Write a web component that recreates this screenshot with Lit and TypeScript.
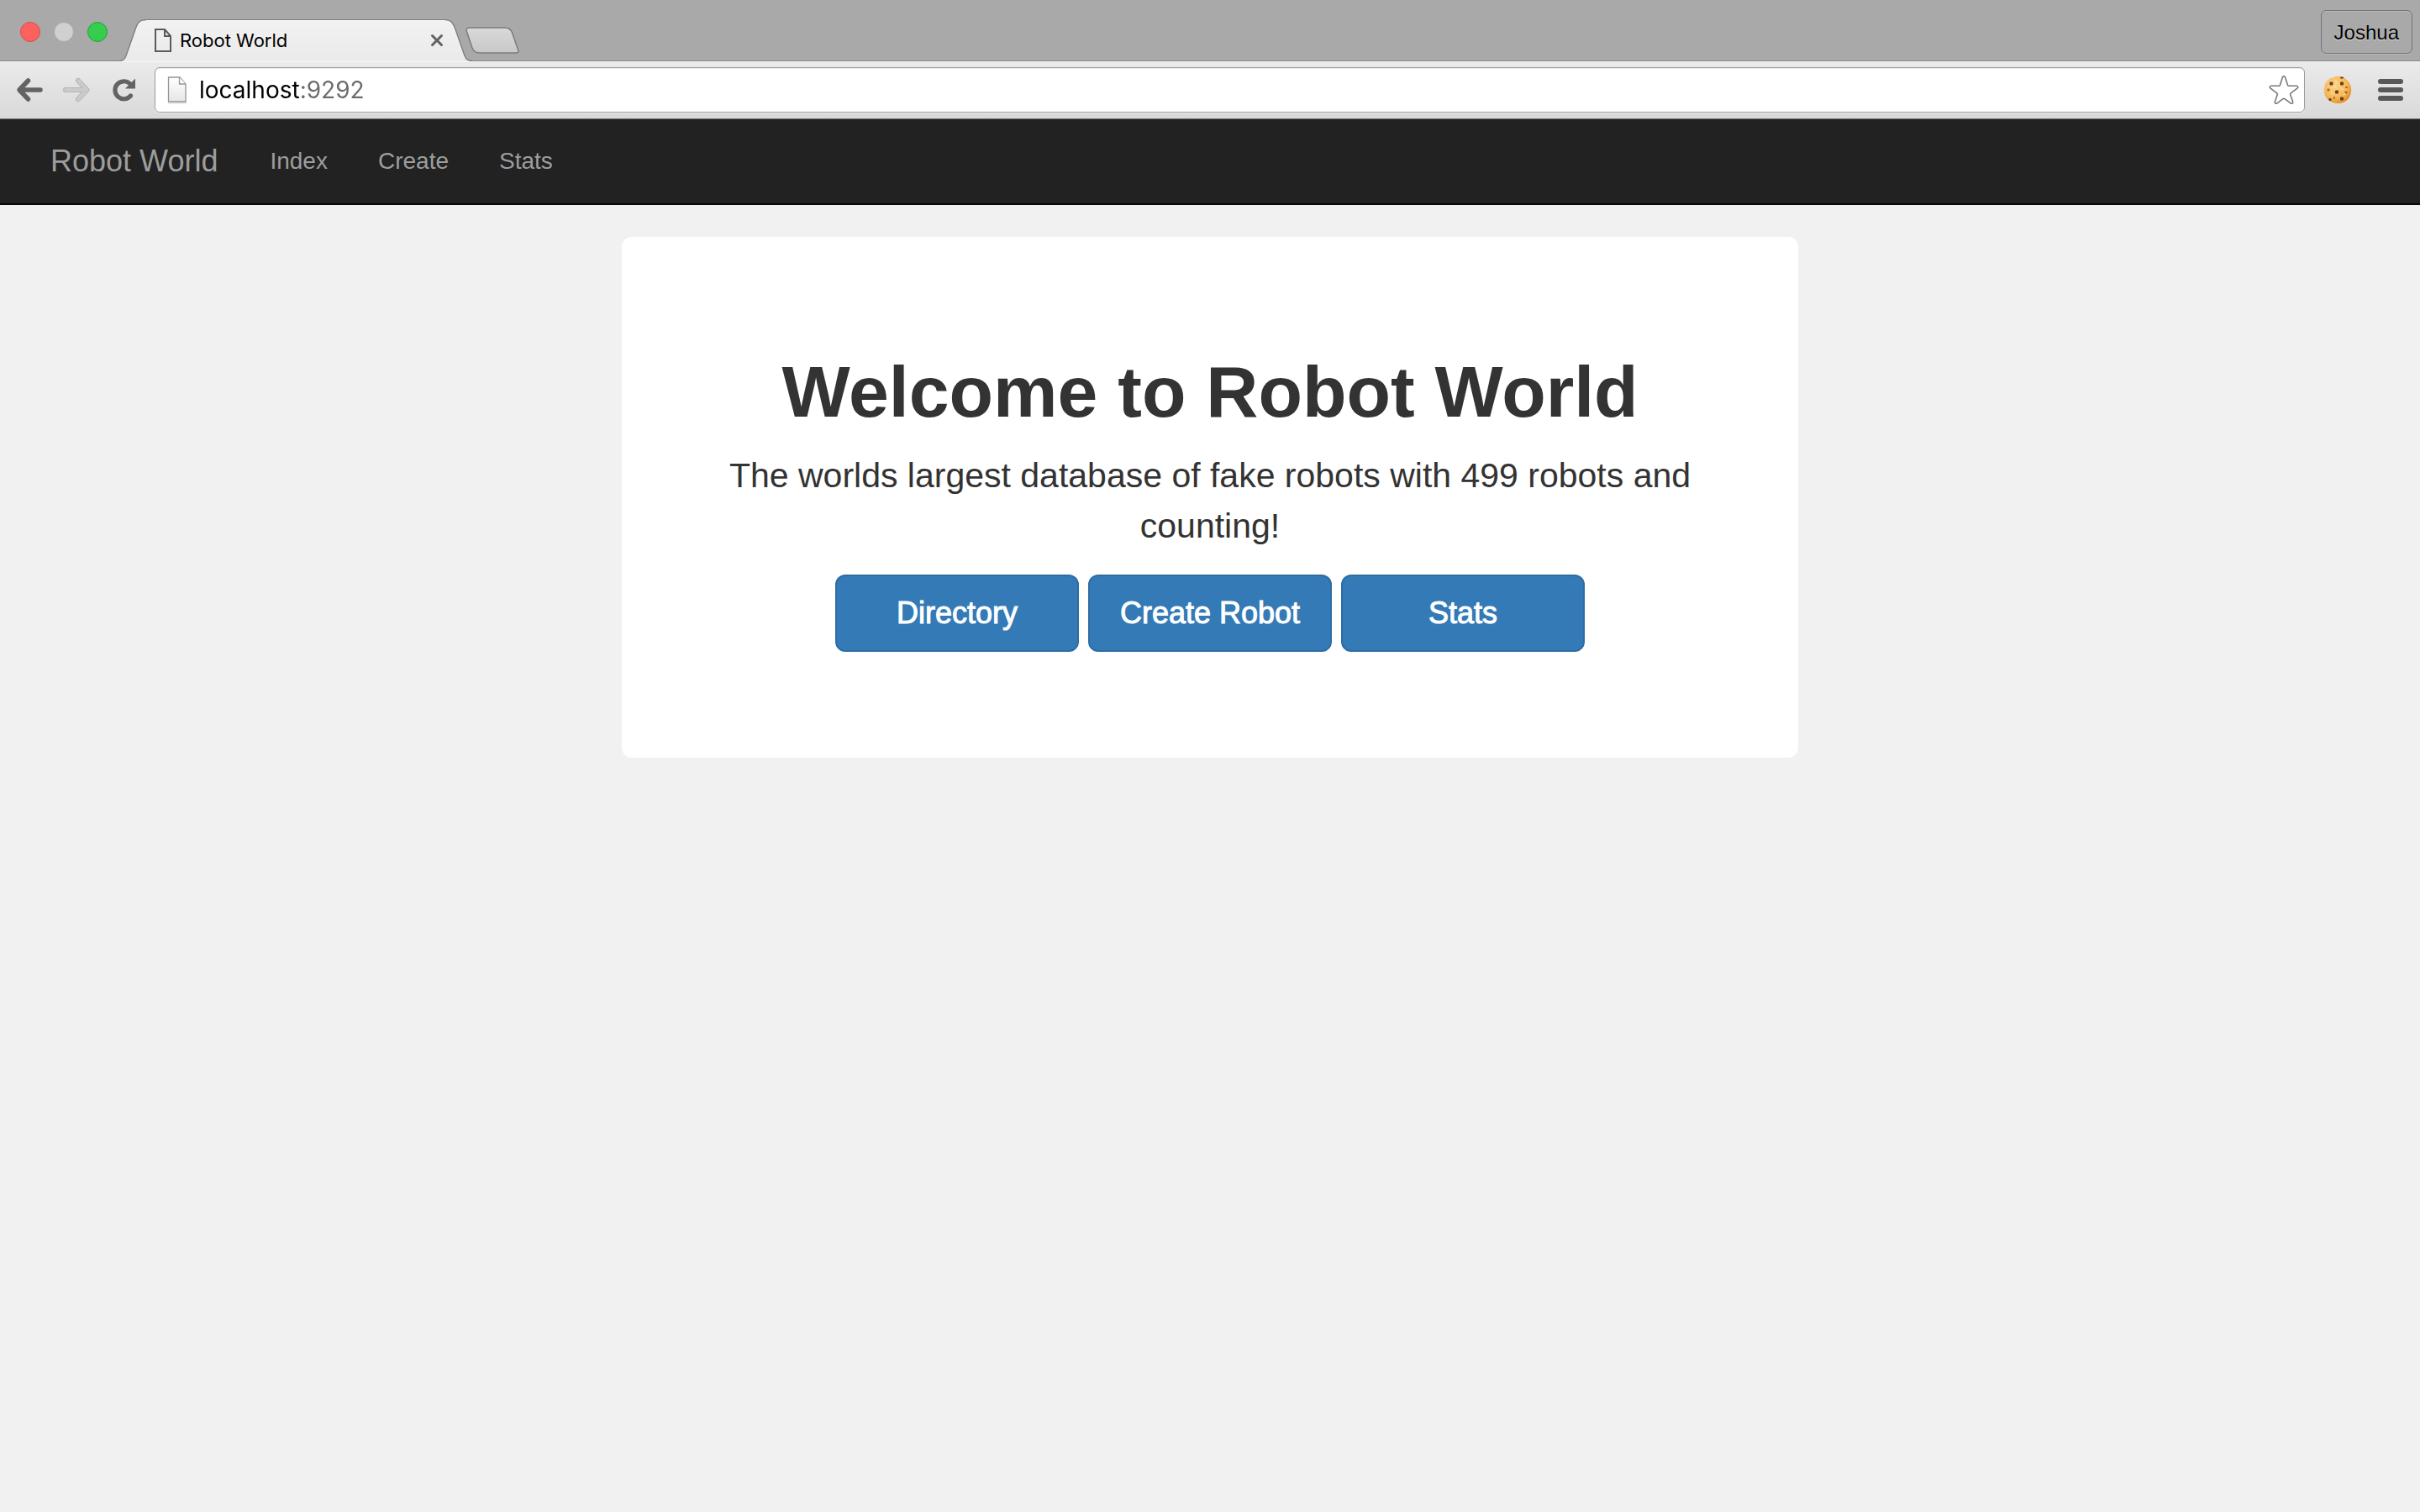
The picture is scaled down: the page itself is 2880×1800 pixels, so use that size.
import { LitElement, html, css } from "lit";
import { customElement, property } from "lit/decorators.js";

@customElement("browser-tabs")
class BrowserTabs extends LitElement {
  @property() title = "";
  @property() profile = "";

  static styles = css`
    :host {
      display: flex;
      align-items: flex-end;
      height: 73px;
      background: linear-gradient(#858585, #858585) bottom / 100% 1px no-repeat, #a9a9a9;
      font-family: Inter, Roboto, sans-serif;
    }
    button {
      padding: 0;
      border: 0;
      background: none;
      font: inherit;
      color: inherit;
    }
    svg {
      display: block;
    }
    .lights {
      display: flex;
      gap: 16px;
      align-self: flex-start;
      padding: 26px 14px 0 24px;
    }
    .light {
      box-sizing: border-box;
      width: 24px;
      height: 24px;
      border: 1px solid #e0484a;
      border-radius: 50%;
      background: #fc625d;
    }
    .light.idle {
      border-color: #a9a9a9;
      background: #d0d0d0;
    }
    .light.zoom {
      border-color: #23a43a;
      background: #35cd4b;
    }
    .tab {
      display: flex;
      height: 50px;
    }
    .face {
      display: flex;
      align-items: center;
      box-sizing: border-box;
      width: 356px;
      padding: 0 2px 2px 10px;
      border-top: 1px solid #7c7c7c;
      background: linear-gradient(#f2f2f2, #eaeaea);
      box-shadow: inset 0 1px #fbfbfb;
    }
    .title {
      flex: 1;
      margin-left: 10px;
      font-size: 22px;
      line-height: 28px;
      color: #000;
    }
    .add {
      margin: 0 auto 9px -8px;
    }
    .profile {
      align-self: flex-start;
      box-sizing: border-box;
      height: 52px;
      margin: 12px 9px 0 0;
      padding: 2px 15px 0;
      border: 1px solid #757575;
      border-radius: 6px;
      box-shadow: inset 0 1px #b9b9b9, 0 1px #b9b9b9;
      font-family: "Liberation Sans", Arial, sans-serif;
      font-size: 24px;
      color: #000;
      text-shadow: 0 1px 1px #dcdcdc;
    }
  `;

  render() {
    return html`
      <div class="lights">
        <button class="light" aria-label="Close window"></button>
        <button class="light idle" aria-label="Minimize window"></button>
        <button class="light zoom" aria-label="Zoom window"></button>
      </div>
      <div class="tab">
        <svg width="32" height="50" viewBox="0 0 32 50" aria-hidden="true">
          <defs>
            <linearGradient id="l" x2="0" y2="1"><stop stop-color="#f2f2f2" /><stop offset="1" stop-color="#eaeaea" /></linearGradient>
          </defs>
          <path d="M0 49.5C5 49.5 6.500 47 8 43.500L19 12C22 3.500 24.500 0.500 32 0.500V50H0Z" fill="url(#l)" />
          <path d="M0 49.500C5 49.500 6.500 47 8 43.500L19 12C22 3.500 24.500 0.500 32 0.500" fill="none" stroke="#7c7c7c" stroke-width="1.300" />
        </svg>
        <div class="face">
          <svg width="20" height="28" viewBox="0 0 20 28" fill="none" stroke="#5a5a5a" stroke-width="2" aria-hidden="true">
            <path d="M1 1H12L19 9V27H1Z" />
            <path d="M12 1V9H19" />
          </svg>
          <span class="title">${this.title}</span>
          <button aria-label="Close tab">
            <svg width="16" height="16" viewBox="0 0 16 16" stroke="#626262" stroke-width="3" stroke-linecap="round">
              <path d="M2.500 2.500 13.500 13.500M13.500 2.500 2.500 13.500" />
            </svg>
          </button>
        </div>
        <svg width="32" height="50" viewBox="0 0 32 50" aria-hidden="true">
          <defs>
            <linearGradient id="r" x2="0" y2="1"><stop stop-color="#f2f2f2" /><stop offset="1" stop-color="#eaeaea" /></linearGradient>
          </defs>
          <path d="M0 0.500C6 0.500 9 3.500 12 12L23 43.500C24.500 47 26 49.500 31 49.500H32V50H0Z" fill="url(#r)" />
          <path d="M0 0.500C6 0.500 9 3.500 12 12L23 43.500C24.500 47 26 49.500 32 49.500" fill="none" stroke="#7c7c7c" stroke-width="1.300" />
        </svg>
      </div>
      <button class="add" aria-label="New tab">
        <svg width="64" height="32" viewBox="0 0 64 32">
          <defs>
            <linearGradient id="n" x2="0" y2="1"><stop stop-color="#d9d9d9" /><stop offset="1" stop-color="#c8c8c8" /></linearGradient>
          </defs>
          <path d="M4 1H47C51.500 1 54 3 55.500 7L62.500 27C63.500 29.500 62.500 31 60.500 31H17C12 31 9.500 29 8 25L1.500 5.500C0.800 3 1.500 1 4 1Z" fill="url(#n)" stroke="#7c7c7c" stroke-width="1.500" />
        </svg>
      </button>
      <button class="profile">${this.profile}</button>
    `;
  }
}

@customElement("browser-toolbar")
class BrowserToolbar extends LitElement {
  @property() address = "";

  static styles = css`
    :host {
      display: flex;
      align-items: center;
      box-sizing: border-box;
      height: 69px;
      padding: 0 20px;
      border-bottom: 1px solid #6e6e6e;
      background: linear-gradient(#ebebeb, #d9d9d9);
      box-shadow: inset 0 1px #f6f6f6;
    }
    button {
      padding: 0;
      border: 0;
      background: none;
    }
    svg {
      display: block;
      overflow: visible;
    }
    .history {
      display: flex;
      gap: 25px;
      margin-right: 22px;
    }
    .omnibox {
      display: flex;
      flex: 1;
      align-items: center;
      box-sizing: border-box;
      height: 54px;
      padding: 0 6px 0 14px;
      border: 1px solid #9c9c9c;
      border-radius: 6px;
      background: #fff;
      box-shadow: inset 0 1px #ececec, 0 1px #efefef;
    }
    .address {
      flex: 1;
      min-width: 0;
      height: 40px;
      margin-left: 14px;
      padding: 0;
      border: 0;
      outline: 0;
      font-family: Inter, Roboto, sans-serif;
      font-size: 28px;
      color: #000;
      /* the host name is black, the port after it is gray */
      background: linear-gradient(90deg, #000 120px, #6b6b6b 120px);
      -webkit-background-clip: text;
      background-clip: text;
      -webkit-text-fill-color: transparent;
    }
    .extension {
      margin: 0 31px 0 22px;
    }
  `;

  render() {
    return html`
      <div class="history">
        <button aria-label="Back">
          <svg width="32" height="28" viewBox="0 0 32 28" fill="none" stroke="#636363" stroke-width="5.500" stroke-linecap="round" stroke-linejoin="round">
            <path d="M13.500 3 3 14 13.500 25M4 14H28" />
          </svg>
        </button>
        <button aria-label="Forward" disabled>
          <svg width="32" height="28" viewBox="0 0 32 28" fill="none" stroke-linecap="round" stroke-linejoin="round">
            <path d="M16 3 26.500 14 16 25M25 14H1" stroke="#b4b4b4" stroke-width="6" />
            <path d="M16 3 26.500 14 16 25M25 14H1" stroke="#cbcbcb" stroke-width="4" />
          </svg>
        </button>
        <button aria-label="Reload">
          <svg width="28" height="28" viewBox="0 0 28 28">
            <path d="M20.500 6.500A10.500 10.500 0 1 0 21.500 21" fill="none" stroke="#636363" stroke-width="5.200" stroke-linecap="round" />
            <path d="M27 0.500V12.500H15Z" fill="#636363" />
          </svg>
        </button>
      </div>
      <div class="omnibox">
        <svg width="24" height="34" viewBox="0 0 24 34" aria-hidden="true">
          <defs>
            <linearGradient id="p" x2="0" y2="1"><stop stop-color="#fff" /><stop offset="1" stop-color="#e6e6e6" /></linearGradient>
          </defs>
          <path d="M1 32.500H23" stroke="#e0e0e0" stroke-width="2" />
          <path d="M1.500 2H15L22 10V31H1.500Z" fill="url(#p)" stroke="#959595" stroke-width="1.300" />
          <path d="M14.500 2V10H22" fill="#fff" stroke="#959595" stroke-width="1.300" />
        </svg>
        <input class="address" type="text" aria-label="Address" .value=${this.address} />
        <button aria-label="Bookmark this page">
          <svg width="36" height="36" viewBox="0 0 36 36" fill="#fff" stroke="#7b7b7b" stroke-width="1.600" stroke-linejoin="round">
            <path d="M16.300 3.200Q18 0 19.700 3.200L22.500 12.200Q22.900 13.200 24 13.200L33.300 13.300Q36 14 33.900 16.200L26.300 21.800Q25.400 22.500 25.700 23.600L28.700 32.200Q29 35 26.300 34.100L19 28.700Q18 28 17 28.700L9.700 34.100Q7 35 7.300 32.200L10.300 23.600Q10.600 22.500 9.700 21.800L2.100 16.200Q0 14 2.700 13.300L12 13.200Q13.100 13.200 13.500 12.200Z" />
          </svg>
        </button>
      </div>
      <button class="extension" aria-label="Cookies">
        <svg width="34" height="34" viewBox="0 0 34 34">
          <defs>
            <radialGradient id="c" cx="0.400" cy="0.350" r="0.700">
              <stop stop-color="#ffd58b" /><stop offset="0.650" stop-color="#f6b657" /><stop offset="1" stop-color="#e08a22" />
            </radialGradient>
          </defs>
          <path d="M12 2C16 0 22 0.500 26 3.500C31 7 34 13 33 19C32.500 26 28 31 22 32.500C16 34 9 32.500 5 28C1 24 0 18 1.500 12C3 7 7 3 12 2Z" fill="url(#c)" />
          <path d="M14 6 17 9M20 14 24 17M9 20 12 23M24 23 27 21M13 14 15 12" stroke="#fbdc9e" stroke-width="1.500" />
          <g fill="#6b3d1b">
            <rect x="7.500" y="7.500" width="4" height="4" rx="1" />
            <rect x="20" y="7.500" width="4" height="4" rx="1" />
            <rect x="14" y="17.500" width="4" height="4" rx="1" />
            <rect x="20" y="25.500" width="4" height="4" rx="1" />
            <rect x="20" y="1.500" width="4" height="2" rx="1" />
            <rect x="6.500" y="27" width="3" height="3" rx="1" />
          </g>
          <g fill="#a9682c">
            <rect x="4.500" y="15.500" width="3" height="3" rx="1" />
            <rect x="26" y="13" width="3" height="2" rx="1" />
            <rect x="25.500" y="18.500" width="3" height="3" rx="1" />
            <rect x="12" y="25" width="2" height="3" rx="1" />
          </g>
        </svg>
      </button>
      <button aria-label="Menu">
        <svg width="30" height="26" viewBox="0 0 30 26" fill="#585858">
          <rect width="30" height="6" rx="3" />
          <rect y="10" width="30" height="6" rx="3" />
          <rect y="20" width="30" height="6" rx="3" />
        </svg>
      </button>
    `;
  }
}

@customElement("site-nav")
class SiteNav extends LitElement {
  static styles = css`
    :host {
      display: block;
      border-bottom: 2px solid #080808;
      background: #222;
    }
    .bar {
      display: flex;
      align-items: center;
      height: 100px;
      padding: 0 30px;
    }
    a {
      padding: 0 30px;
      font-size: 28px;
      line-height: 40px;
      color: #9d9d9d;
      text-decoration: none;
    }
    .brand {
      padding-right: 32px;
      font-size: 36px;
    }
  `;

  links = ["Index", "Create", "Stats"];

  render() {
    return html`
      <nav class="bar">
        <a class="brand" href="#">Robot World</a>
        ${this.links.map((label) => html`<a href="#${label.toLowerCase()}">${label}</a>`)}
      </nav>
    `;
  }
}

@customElement("welcome-card")
class WelcomeCard extends LitElement {
  @property({ type: Number }) count = 0;

  static styles = css`
    :host {
      display: block;
      box-sizing: border-box;
      max-width: 1400px;
      margin: 38px auto 0;
      padding: 134px 120px 126px;
      border-radius: 12px;
      background: #fff;
      color: #333;
      text-align: center;
    }
    h1 {
      margin: 0 0 20px;
      font-size: 86px;
      font-weight: 700;
      line-height: 100px;
    }
    p {
      margin: 0 0 28px;
      font-size: 41px;
      line-height: 60px;
    }
    .actions {
      display: flex;
      justify-content: center;
      gap: 11px;
    }
    .action {
      box-sizing: border-box;
      width: 290px;
      padding: 20px 0;
      border: 2px solid #2e6da4;
      border-radius: 12px;
      background: #337ab7;
      font-size: 36px;
      line-height: 48px;
      color: #fff;
      text-decoration: none;
      -webkit-text-stroke: 1px #fff;
    }
  `;

  actions = ["Directory", "Create Robot", "Stats"];

  render() {
    const tagline = `The worlds largest database of fake robots with ${this.count} robots and counting!`;
    return html`
      <h1>Welcome to Robot World</h1>
      <p>${tagline}</p>
      <div class="actions">
        ${this.actions.map((label) => html`<a class="action" href="#">${label}</a>`)}
      </div>
    `;
  }
}

@customElement("app-root")
class AppRoot extends LitElement {
  static styles = css`
    :host {
      display: block;
      min-height: 100vh;
      background: #f1f1f1;
      font-family: "Liberation Sans", Arial, sans-serif;
    }
  `;

  render() {
    return html`
      <browser-tabs title="Robot World" profile="Joshua"></browser-tabs>
      <browser-toolbar address="localhost:9292"></browser-toolbar>
      <site-nav></site-nav>
      <main><welcome-card .count=${499}></welcome-card></main>
    `;
  }
}
